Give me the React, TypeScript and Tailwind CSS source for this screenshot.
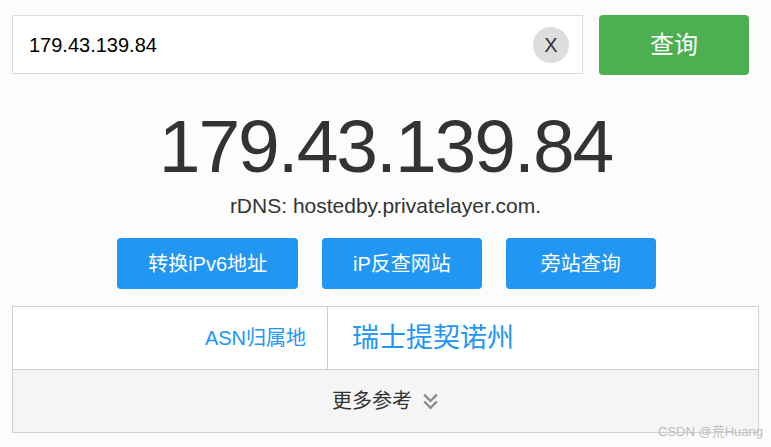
import { useState } from 'react'

const font = { fontFamily: '"Liberation Sans", "Noto Sans CJK SC", sans-serif' }

export default function App() {
  const [ip, setIp] = useState('179.43.139.84')

  return (
    <div
      className="relative min-h-[447px] w-full bg-[#fcfcfc] px-3 pt-[15px] text-[#333]"
      style={font}
    >
      <div className="flex items-start gap-4 pr-[10px]">
        <div className="flex h-[59px] flex-1 items-center border border-[#dcdcdc] bg-white pl-4 pr-[13px]">
          <input
            value={ip}
            onChange={e => setIp(e.target.value)}
            className="flex-1 bg-transparent text-[20px] text-black outline-none"
          />
          <button
            onClick={() => setIp('')}
            className="flex h-9 w-9 items-center justify-center rounded-full bg-[#dddddd] text-[20px] text-[#333]"
          >
            X
          </button>
        </div>
        <button className="h-[60px] w-[150px] rounded bg-[#4caf50] text-[24px] text-white">
          查询
        </button>
      </div>

      <div className="mt-[34px] text-center text-[75px] leading-none tracking-[-2px]">
        179.43.139.84
      </div>
      <div className="mt-[7px] text-center text-[21px] leading-[30px]">
        rDNS: hostedby.privatelayer.com.
      </div>

      <div className="mt-[17px] flex justify-center gap-6 pl-[2px]">
        <button className="h-[51px] min-w-[150px] rounded bg-[#2196f3] px-[31px] text-[20px] text-white">
          转换iPv6地址
        </button>
        <button className="h-[51px] min-w-[150px] rounded bg-[#2196f3] px-[31px] text-[20px] text-white">
          iP反查网站
        </button>
        <button className="h-[51px] min-w-[150px] rounded bg-[#2196f3] px-[31px] text-[20px] text-white">
          旁站查询
        </button>
      </div>

      <div className="mt-[17px] border border-[#d0d0d0] bg-white">
        <div className="flex h-[62px]">
          <div className="flex w-[315px] items-center justify-end border-r border-[#d0d0d0] pr-[21px] text-[20px] text-[#2196f3]">
            ASN归属地
          </div>
          <div className="flex flex-1 items-center pl-[24px] text-[27px] text-[#2196f3]">
            瑞士提契诺州
          </div>
        </div>
        <div className="flex h-[63px] items-center justify-center gap-[10px] border-t border-[#d0d0d0] bg-[#f5f5f5] text-[20px] text-[#333]">
          <span>更多参考</span>
          <svg width="17" height="17" viewBox="0 0 16 16" fill="none" stroke="#8a8a8a" strokeWidth="2.2">
            <polyline points="2,1.5 8,7.5 14,1.5" />
            <polyline points="2,8 8,14 14,8" />
          </svg>
        </div>
      </div>

      <div className="absolute bottom-[6px] right-2 text-[13px] text-[#bdbdbd]">
        CSDN @荒Huang
      </div>
    </div>
  )
}
